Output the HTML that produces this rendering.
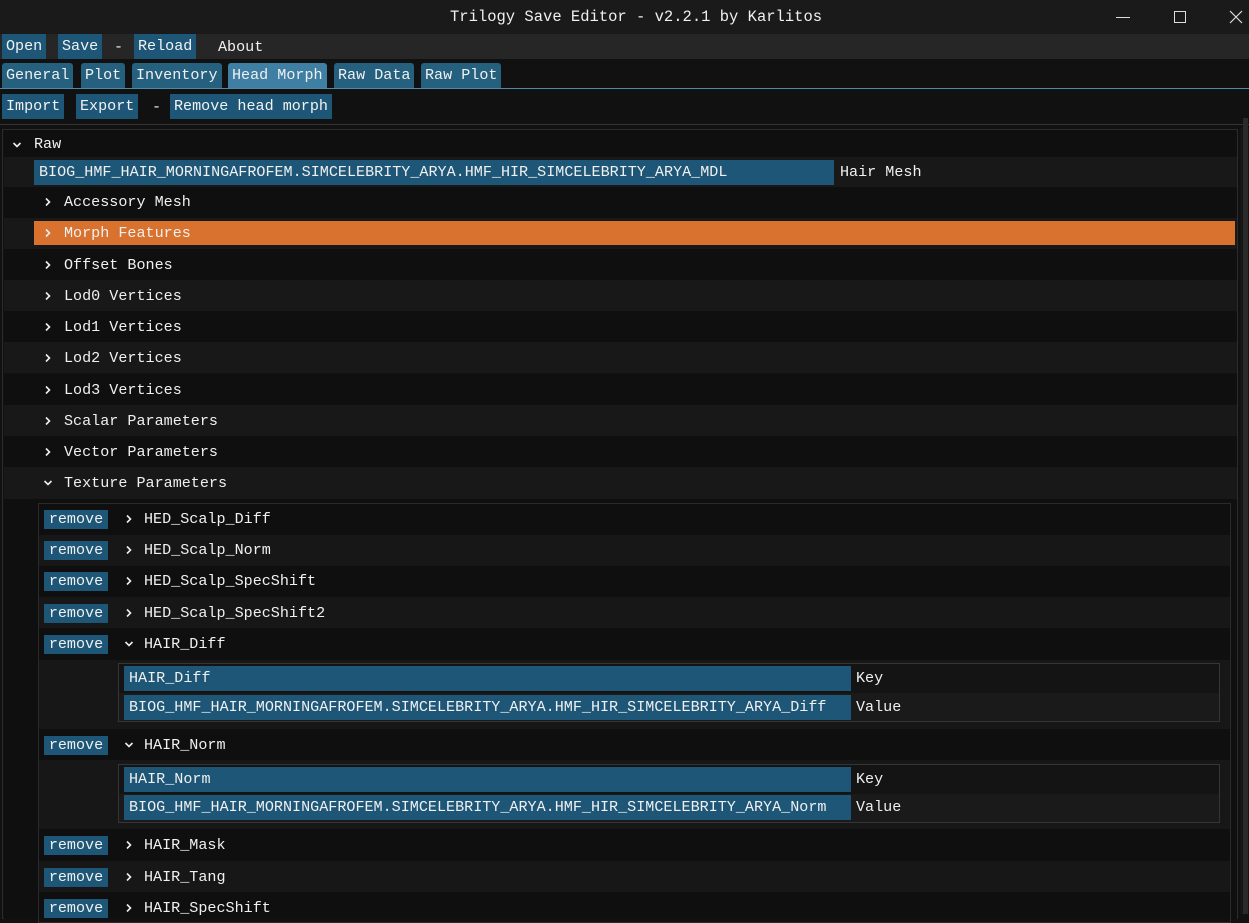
<!DOCTYPE html>
<html><head><meta charset="utf-8"><style>
*{margin:0;padding:0;box-sizing:border-box}
body{width:1249px;height:914px;background:#111;font-family:"Liberation Mono",monospace;font-size:15.1px;color:#f0f0f0;position:relative;overflow:hidden}
.a{position:absolute;white-space:nowrap}
.b{position:absolute;background:#1d5677;height:25px;line-height:25px;padding:0 4px;color:#f2f2f2}
.t{position:absolute;background:#25607f;height:25px;line-height:25px;padding:0 4px;border-radius:3px 3px 0 0}
.row{position:absolute;left:4px;width:1233px;height:31px}
.d{background:#0f0f0f}.l{background:#181818}
.lbl{position:absolute;line-height:20px;white-space:nowrap}
.ch{position:absolute;width:10px;height:10px}
.rm{position:absolute;left:44px;width:64px;height:19px;background:#1d5677;line-height:19px;text-align:center}
.fld{position:absolute;background:#1d5677;height:25px;line-height:25px;padding-left:5px;white-space:nowrap}
</style></head><body>
<div class="a" style="left:0;top:0;width:1249px;height:34px;background:#1a1a1a"></div>
<div class="a" style="left:450px;top:8px;font-size:15.5px">Trilogy Save Editor - v2.2.1 by Karlitos</div>
<div class="a" style="left:1116px;top:17px;width:14px;height:1px;background:#ddd"></div>
<div class="a" style="left:1174px;top:11px;width:12px;height:12px;border:1px solid #ddd"></div>
<svg class="a" style="left:1229px;top:10px" width="14" height="14"><path d="M1 1L13 13M13 1L1 13" stroke="#ddd" stroke-width="1.2"/></svg>
<div class="a" style="left:0;top:34px;width:1249px;height:25px;background:#262626"></div>
<div class="b" style="left:2px;top:34px">Open</div>
<div class="b" style="left:58px;top:34px">Save</div>
<div class="a" style="left:114px;top:38px">-</div>
<div class="b" style="left:134px;top:34px">Reload</div>
<div class="a" style="left:218px;top:38px">About</div>
<div class="t" style="left:2px;top:63px">General</div>
<div class="t" style="left:81px;top:63px">Plot</div>
<div class="t" style="left:132px;top:63px">Inventory</div>
<div class="t" style="left:228px;top:63px;background:#3e7fa3">Head Morph</div>
<div class="t" style="left:334px;top:63px">Raw Data</div>
<div class="t" style="left:421px;top:63px">Raw Plot</div>
<div class="a" style="left:0;top:88px;width:1249px;height:1px;background:#4d8aa8"></div>
<div class="b" style="left:2px;top:94px">Import</div>
<div class="b" style="left:76px;top:94px">Export</div>
<div class="a" style="left:152px;top:98px">-</div>
<div class="b" style="left:170px;top:94px">Remove head morph</div>
<div class="a" style="left:0;top:124px;width:1249px;height:1px;background:#333"></div>
<div class="a" style="left:2px;top:129px;width:1236px;height:790px;border:1px solid #2c2c2c"></div>
<div class="a" style="left:1240px;top:128px;width:9px;height:786px;background:#161616"></div>
<div class="a" style="left:1243px;top:118px;width:5px;height:796px;background:#2a2a2a"></div>
<div class="row d" style="top:130px"></div>
<div class="row l" style="top:157px"></div>
<div class="row d" style="top:187px"></div>
<div class="row l" style="top:218px"></div>
<div class="row d" style="top:249px"></div>
<div class="row l" style="top:280px"></div>
<div class="row d" style="top:311px"></div>
<div class="row l" style="top:342px"></div>
<div class="row d" style="top:374px"></div>
<div class="row l" style="top:405px"></div>
<div class="row d" style="top:436px"></div>
<div class="row l" style="top:467px;height:32px"></div>
<div class="row d" style="top:499px;height:420px"></div>
<svg class="ch" style="left:12px;top:140px" viewBox="0 0 10 10"><path d="M1.5 3L5 6.5L8.5 3" fill="none" stroke="#eee" stroke-width="1.6"/></svg>
<div class="lbl" style="left:34px;top:134px">Raw</div>
<div class="fld" style="left:34px;top:160px;width:800px">BIOG_HMF_HAIR_MORNINGAFROFEM.SIMCELEBRITY_ARYA.HMF_HIR_SIMCELEBRITY_ARYA_MDL</div>
<div class="lbl" style="left:840px;top:162px">Hair Mesh</div>
<div class="a" style="left:34px;top:221px;width:1201px;height:24px;background:#d9722e"></div>

<svg class="ch" style="left:43px;top:197px" viewBox="0 0 10 10"><path d="M3 1.5L6.5 5L3 8.5" fill="none" stroke="#eee" stroke-width="1.6"/></svg><div class="lbl" style="left:64px;top:192px">Accessory Mesh</div>
<svg class="ch" style="left:43px;top:228px" viewBox="0 0 10 10"><path d="M3 1.5L6.5 5L3 8.5" fill="none" stroke="#eee" stroke-width="1.6"/></svg><div class="lbl" style="left:64px;top:223px">Morph Features</div>
<svg class="ch" style="left:43px;top:260px" viewBox="0 0 10 10"><path d="M3 1.5L6.5 5L3 8.5" fill="none" stroke="#eee" stroke-width="1.6"/></svg><div class="lbl" style="left:64px;top:255px">Offset Bones</div>
<svg class="ch" style="left:43px;top:291px" viewBox="0 0 10 10"><path d="M3 1.5L6.5 5L3 8.5" fill="none" stroke="#eee" stroke-width="1.6"/></svg><div class="lbl" style="left:64px;top:286px">Lod0 Vertices</div>
<svg class="ch" style="left:43px;top:322px" viewBox="0 0 10 10"><path d="M3 1.5L6.5 5L3 8.5" fill="none" stroke="#eee" stroke-width="1.6"/></svg><div class="lbl" style="left:64px;top:317px">Lod1 Vertices</div>
<svg class="ch" style="left:43px;top:353px" viewBox="0 0 10 10"><path d="M3 1.5L6.5 5L3 8.5" fill="none" stroke="#eee" stroke-width="1.6"/></svg><div class="lbl" style="left:64px;top:348px">Lod2 Vertices</div>
<svg class="ch" style="left:43px;top:385px" viewBox="0 0 10 10"><path d="M3 1.5L6.5 5L3 8.5" fill="none" stroke="#eee" stroke-width="1.6"/></svg><div class="lbl" style="left:64px;top:380px">Lod3 Vertices</div>
<svg class="ch" style="left:43px;top:416px" viewBox="0 0 10 10"><path d="M3 1.5L6.5 5L3 8.5" fill="none" stroke="#eee" stroke-width="1.6"/></svg><div class="lbl" style="left:64px;top:411px">Scalar Parameters</div>
<svg class="ch" style="left:43px;top:447px" viewBox="0 0 10 10"><path d="M3 1.5L6.5 5L3 8.5" fill="none" stroke="#eee" stroke-width="1.6"/></svg><div class="lbl" style="left:64px;top:442px">Vector Parameters</div>
<svg class="ch" style="left:43px;top:478px" viewBox="0 0 10 10"><path d="M1.5 3L5 6.5L8.5 3" fill="none" stroke="#eee" stroke-width="1.6"/></svg><div class="lbl" style="left:64px;top:473px">Texture Parameters</div>

<div class="a" style="left:38px;top:503px;width:1193px;height:420px;border:1px solid #2a2a2a"></div>
<div class="a" style="left:39px;top:535px;width:1191px;height:31px;background:#171717"></div>
<div class="a" style="left:39px;top:597px;width:1191px;height:31px;background:#171717"></div>
<div class="a" style="left:39px;top:660px;width:1191px;height:69px;background:#171717"></div>
<div class="a" style="left:39px;top:760px;width:1191px;height:69px;background:#171717"></div>
<div class="a" style="left:39px;top:861px;width:1191px;height:31px;background:#171717"></div>

<div class="rm" style="top:510px">remove</div><svg class="ch" style="left:124px;top:514px" viewBox="0 0 10 10"><path d="M3 1.5L6.5 5L3 8.5" fill="none" stroke="#eee" stroke-width="1.6"/></svg><div class="lbl" style="left:144px;top:509px">HED_Scalp_Diff</div>
<div class="rm" style="top:541px">remove</div><svg class="ch" style="left:124px;top:545px" viewBox="0 0 10 10"><path d="M3 1.5L6.5 5L3 8.5" fill="none" stroke="#eee" stroke-width="1.6"/></svg><div class="lbl" style="left:144px;top:540px">HED_Scalp_Norm</div>
<div class="rm" style="top:572px">remove</div><svg class="ch" style="left:124px;top:576px" viewBox="0 0 10 10"><path d="M3 1.5L6.5 5L3 8.5" fill="none" stroke="#eee" stroke-width="1.6"/></svg><div class="lbl" style="left:144px;top:571px">HED_Scalp_SpecShift</div>
<div class="rm" style="top:604px">remove</div><svg class="ch" style="left:124px;top:608px" viewBox="0 0 10 10"><path d="M3 1.5L6.5 5L3 8.5" fill="none" stroke="#eee" stroke-width="1.6"/></svg><div class="lbl" style="left:144px;top:603px">HED_Scalp_SpecShift2</div>
<div class="rm" style="top:635px">remove</div><svg class="ch" style="left:124px;top:639px" viewBox="0 0 10 10"><path d="M1.5 3L5 6.5L8.5 3" fill="none" stroke="#eee" stroke-width="1.6"/></svg><div class="lbl" style="left:144px;top:634px">HAIR_Diff</div>
<div class="rm" style="top:736px">remove</div><svg class="ch" style="left:124px;top:740px" viewBox="0 0 10 10"><path d="M1.5 3L5 6.5L8.5 3" fill="none" stroke="#eee" stroke-width="1.6"/></svg><div class="lbl" style="left:144px;top:735px">HAIR_Norm</div>
<div class="rm" style="top:836px">remove</div><svg class="ch" style="left:124px;top:840px" viewBox="0 0 10 10"><path d="M3 1.5L6.5 5L3 8.5" fill="none" stroke="#eee" stroke-width="1.6"/></svg><div class="lbl" style="left:144px;top:835px">HAIR_Mask</div>
<div class="rm" style="top:868px">remove</div><svg class="ch" style="left:124px;top:872px" viewBox="0 0 10 10"><path d="M3 1.5L6.5 5L3 8.5" fill="none" stroke="#eee" stroke-width="1.6"/></svg><div class="lbl" style="left:144px;top:867px">HAIR_Tang</div>
<div class="rm" style="top:899px">remove</div><svg class="ch" style="left:124px;top:903px" viewBox="0 0 10 10"><path d="M3 1.5L6.5 5L3 8.5" fill="none" stroke="#eee" stroke-width="1.6"/></svg><div class="lbl" style="left:144px;top:898px">HAIR_SpecShift</div>

<div class="a" style="left:118px;top:663px;width:1102px;height:59px;border:1px solid #353535;background:#141414"></div>
<div class="a" style="left:119px;top:693px;width:1100px;height:28px;background:#1a1a1a"></div>
<div class="fld" style="left:124px;top:666px;width:727px">HAIR_Diff</div>
<div class="fld" style="left:124px;top:695px;width:727px">BIOG_HMF_HAIR_MORNINGAFROFEM.SIMCELEBRITY_ARYA.HMF_HIR_SIMCELEBRITY_ARYA_Diff</div>
<div class="lbl" style="left:856px;top:668px">Key</div>
<div class="lbl" style="left:856px;top:697px">Value</div>
<div class="a" style="left:118px;top:764px;width:1102px;height:59px;border:1px solid #353535;background:#141414"></div>
<div class="a" style="left:119px;top:794px;width:1100px;height:28px;background:#1a1a1a"></div>
<div class="fld" style="left:124px;top:767px;width:727px">HAIR_Norm</div>
<div class="fld" style="left:124px;top:795px;width:727px">BIOG_HMF_HAIR_MORNINGAFROFEM.SIMCELEBRITY_ARYA.HMF_HIR_SIMCELEBRITY_ARYA_Norm</div>
<div class="lbl" style="left:856px;top:769px">Key</div>
<div class="lbl" style="left:856px;top:797px">Value</div>
</body></html>
